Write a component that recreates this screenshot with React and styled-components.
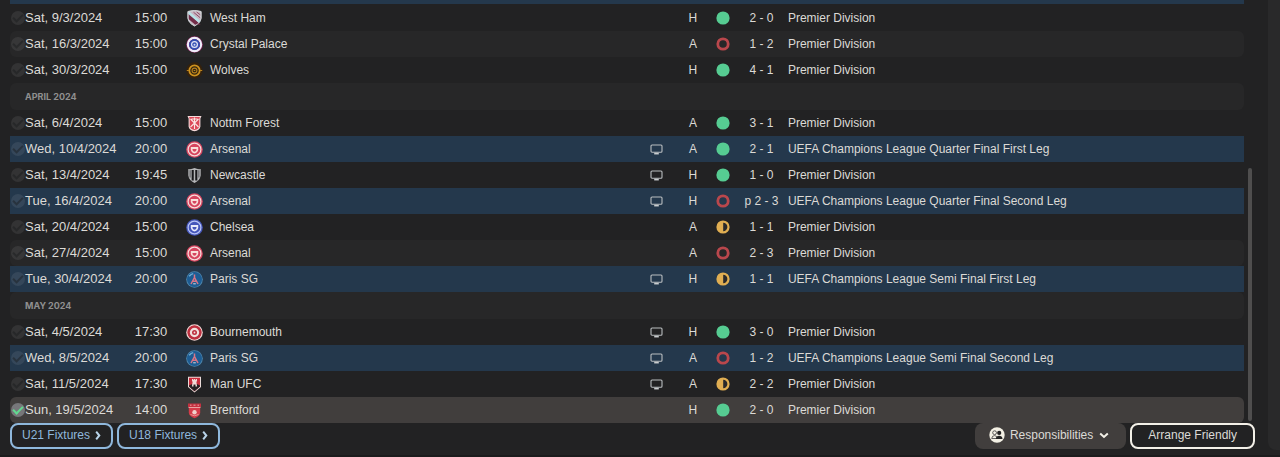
import React from 'react';
import styled, { createGlobalStyle, css } from 'styled-components';

const colors = {
    page: '#222223',
    stripe: '#272728',
    europe: '#24384c',
    selected: '#413e3d',
    text: '#dcdad6',
    muted: '#8f8f8f',
    link: '#8fb8dc',
    win: '#56cc92',
    loss: '#b9474c',
    draw: '#e0ae52'
};

const GlobalStyle = createGlobalStyle`
    * {
        box-sizing: border-box;
    }

    body {
        margin: 0;
        background: ${colors.page};
        color: ${colors.text};
        font-family: 'Liberation Sans', Arial, sans-serif;
        font-size: 12px;
    }
`;

// page: fixtures on the left, edge of the next panel on the right
const Page = styled.div`
    display: flex;
    gap: 13px;
    min-height: 100vh;
    border-bottom: 2px solid #1b1b1c;
`;

const Main = styled.main`
    flex: 1;
    min-width: 0;
    padding-left: 10px;
`;

const SidePanel = styled.aside`
    width: 12px;
    margin-bottom: 5px;
    background: #29292a;
    border-bottom-left-radius: 8px;
`;

// list + scrollbar
const ListArea = styled.div`
    display: flex;
    gap: 4px;
    padding-right: 3px;
`;

const ListBody = styled.div`
    flex: 1;
    min-width: 0;
`;

// tail of the row that is scrolled out of view
const ClippedRow = styled.div`
    height: 4px;
    margin-bottom: 1px;
    background: ${colors.europe};
`;

const ScrollTrack = styled.div`
    display: flex;
    flex-direction: column;
    justify-content: flex-end;
    width: 4px;
    padding-bottom: 2px;
`;

const ScrollThumb = styled.div`
    height: 60%;
    border-radius: 2px;
    background: #4f4e4e;
`;

const Table = styled.table`
    width: 100%;
    table-layout: fixed;
    border-collapse: separate;
    border-spacing: 0;
`;

const Col = styled.col`
    width: ${props => props.$width};
`;

const MonthCell = styled.th`
    height: 27px;
    padding: 0 0 0 15px;
    border-radius: 6px;
    background: ${colors.stripe};
    color: ${colors.muted};
    font-family: Inter, sans-serif;
    font-size: 9px;
    font-weight: 700;
    text-align: left;
    text-transform: uppercase;
`;

const rounded = css`
    > :first-child {
        border-radius: 6px 0 0 6px;
    }

    > :last-child {
        border-radius: 0 6px 6px 0;
    }
`;

const Row = styled.tr`
    > td {
        background: ${props => props.$tone ? colors[props.$tone] : 'transparent'};
    }

    ${props => props.$tone !== 'europe' && rounded}
`;

const Cell = styled.td`
    height: 26px;
    padding: 0;
    line-height: 16px;
    text-align: ${props => props.$align || 'left'};
    white-space: nowrap;

    svg {
        display: block;
        margin: 0 auto;
    }
`;

// date and kick-off
const TimeCell = styled(Cell)`
    font-size: 13px;
`;

const ClubCell = styled(Cell)`
    padding-left: 3px;
`;

// round tick box
const Tick = styled.input`
    appearance: none;
    display: grid;
    place-items: center;
    width: 14px;
    height: 14px;
    margin: 0 0 0 1px;
    border-radius: 50%;
    background: rgba(255, 255, 255, 0.08);

    &::after {
        content: '';
        width: 8px;
        height: 4px;
        margin-bottom: 3px;
        border: solid rgba(24, 26, 28, 0.45);
        border-width: 0 0 2px 2px;
        transform: rotate(-45deg);
    }

    &:checked {
        background: #77777a;
    }

    &:checked::after {
        border-color: #62d990;
    }
`;

const Footer = styled.footer`
    display: flex;
    align-items: center;
    gap: 4px;
`;

const Spacer = styled.div`
    flex-grow: 1;
`;

const Button = styled.button`
    display: flex;
    align-items: center;
    gap: 5px;
    height: 26px;
    padding: 0 10px 2px;
    border: 2px solid currentColor;
    border-radius: 8px;
    background: transparent;
    color: ${colors.link};
    font: inherit;
    line-height: 16px;
    white-space: nowrap;
`;

const LightButton = styled(Button)`
    padding: 0 16px 2px;
    border-color: #f3f0e8;
    color: ${colors.text};
`;

const SolidButton = styled(Button)`
    padding: 0 14px 2px 12px;
    border-color: transparent;
    background: ${colors.selected};
    color: ${colors.text};
`;

// club badges
const shield = 'M1.5 1.5Q8 -.4 14.5 1.5V8Q14 13 8 15.8Q2 13 1.5 8Z';

const RoundCrest = ({ outer, ring, inner, children }) => (
    <svg width="17" height="17" viewBox="0 0 17 17">
        <circle cx="8.5" cy="8.5" r="8.3" fill={outer}/>
        <circle cx="8.5" cy="8.5" r="6.4" fill="none" stroke={ring} strokeWidth="1.2"/>
        <circle cx="8.5" cy="8.5" r="4.4" fill={inner}/>
        {children}
    </svg>
);

const ShieldCrest = ({ children }) => (
    <svg width="17" height="17" viewBox="-.5 0 17 17">{children}</svg>
);

const cup = 'M4.8 6h7.4v2.6q-.4 3.2-3.7 3.9q-3.3-.7-3.7-3.9z';
const cupHole = 'M6.5 8H10.5V9Q10 10.4 8.5 10.8Q7 10.4 6.5 9Z';

const crests = {
    'West Ham': (
        <ShieldCrest>
            <path d={shield} fill="#c7b7c2" stroke="#dadde0"/>
            <path d="M2 3L14 14.5L9 15L2 9Z" fill="#722c48"/>
            <path d="M2 2.5L13.3 12" stroke="#b8e3e8" strokeWidth="2.4"/>
            <path d="M7 2.2L14 8M10 1.8L14 5" stroke="#914c69"/>
            <path d={shield} fill="none" stroke="#c9ccd0" strokeWidth=".9"/>
        </ShieldCrest>
    ),
    'Crystal Palace': (
        <RoundCrest outer="#8f2b62" ring="#efedf8" inner="#3551ad">
            <circle cx="8.5" cy="8.5" r="6.7" fill="none" stroke="#eeedfa" strokeWidth="2"/>
            <circle cx="8.5" cy="8.5" r="5.4" fill="#3450b3"/>
            <circle cx="8.5" cy="8.5" r="2.9" fill="none" stroke="#e7e5f4" strokeWidth="1.2"/>
            <circle cx="8.5" cy="8.8" r="1" fill="#d5d7f4"/>
        </RoundCrest>
    ),
    'Wolves': (
        <RoundCrest outer="#34220e" ring="#34220e" inner="#352710">
            <circle cx="8.5" cy="8.5" r="5.2" fill="none" stroke="#ce921e" strokeWidth="1.8"/>
            <circle cx="8.5" cy="8.5" r="2.4" fill="none" stroke="#b47e1c" strokeWidth="1.1"/>
            <path d="M.8 8.5H3M14 8.5H16.2M7.7 8.5h1.6" stroke="#b8821f"/>
        </RoundCrest>
    ),
    'Nottm Forest': (
        <ShieldCrest>
            <path d="M1 1H15L13.9 3.5V11.7Q13 15.3 8 16.2Q3 15.3 2.1 11.7V3.5Z" fill="#f5dada"/>
            <path d="M2.6 2H13.4L12.8 4V11.5Q12 14.2 8 15Q4 14.2 3.2 11.5V4Z" fill="#dc4858"/>
            <path d="M8 2.5V14M4 4L12 12M12 4L4 12M5 4H11" stroke="#fae4e2" strokeWidth="1.1"/>
        </ShieldCrest>
    ),
    'Arsenal': (
        <RoundCrest outer="#d6455f" ring="#f7dcdc" inner="#d6455f">
            <path d={cup} fill="#f9dfda"/>
            <path d={cupHole} fill="#d6455f"/>
        </RoundCrest>
    ),
    'Newcastle': (
        <ShieldCrest>
            <path d="M1.8 2Q5 2.5 8 1Q11 2.5 14.2 2V8.5Q13.5 13.5 8 16Q2.5 13.5 1.8 8.5Z" fill="#b5b6b8"/>
            <path d="M3.6 3.2V10.6M12.4 3.2V10.6" stroke="#55565a" strokeWidth="1"/>
            <path d="M6.2 3V13.4M9.8 3V13.4" stroke="#18181a" strokeWidth="2.1"/>
        </ShieldCrest>
    ),
    'Chelsea': (
        <RoundCrest outer="#4657bb" ring="#b9c4f5" inner="#4657bb">
            <path d={cup} fill="#e8eafa"/>
            <path d={cupHole} fill="#4657bb"/>
        </RoundCrest>
    ),
    'Paris SG': (
        <RoundCrest outer="#4f87ad" ring="#1d5c93" inner="#1d5c93">
            <circle cx="8.5" cy="8.5" r="7.4" fill="#1d5c93"/>
            <path d="M3.2 5.2Q5 3 7.2 2.6" fill="none" stroke="#6fb0d6" strokeWidth="1.4"/>
            <path d="M8.5 3.5V6.5L12 13M8.5 6.5L5 13M6.5 10.2H10.5" fill="none" stroke="#d87586" strokeWidth="1.5"/>
            <path d="M7.2 12.8h2.6" stroke="#d5d9de"/>
        </RoundCrest>
    ),
    'Bournemouth': (
        <RoundCrest outer="#eed3d1" ring="#bd303f" inner="#efe2df">
            <circle cx="8.5" cy="8.5" r="5.8" fill="none" stroke="#bd303f" strokeWidth="2.2"/>
            <circle cx="8.5" cy="8.5" r="2.5" fill="#bd303f"/>
            <circle cx="8.5" cy="8.5" r=".9" fill="#f2dedb"/>
        </RoundCrest>
    ),
    'Man UFC': (
        <ShieldCrest>
            <path d="M1.5 .7H14.5V11L8 16.5L1.5 11Z" fill="#ebdcda"/>
            <path d="M2.5 1.7H13.5V10.5L8 15.2L2.5 10.5Z" fill="#c92c3c"/>
            <path d="M2.5 9.5L5 8.2H11L13.5 9.5V10.5L8 15.2L2.5 10.5Z" fill="#252022"/>
            <path d="M5.5 3H6.8V4H7.4V3H8.6V4H9.2V3H10.5V5.5H9.8L10.6 10.5H9V8.5H7V10.5H5.4L6.2 5.5H5.5Z" fill="#f2dad7"/>
        </ShieldCrest>
    ),
    'Brentford': (
        <ShieldCrest>
            <path d="M1.5 1.5H14.5V5H1.5Z" fill="#c43140"/>
            <path d="M2.3 6H13.7V11Q13 14.5 8 16.2Q3 14.5 2.3 11Z" fill="#d53b49"/>
            <path d="M2 5.5H14M3.5 3.2H5M7 3.2H9M11 3.2H12.5" stroke="#e9a3a3"/>
            <circle cx="8" cy="10.3" r="2.2" fill="#f1d0cb"/>
            <path d="M4 12.5Q8 15 12 12.5" fill="none" stroke="#ec9a97"/>
        </ShieldCrest>
    )
};

const Screen = () => (
    <svg width="13" height="11" viewBox="0 0 13 11">
        <rect x="1" y="1" width="11" height="7.2" rx="1" fill="none" stroke="#b9bdc0" strokeWidth="1.1"/>
        <path d="M4.2 9.6H8.8" stroke="#c9ccce" strokeWidth="1.7"/>
    </svg>
);

const Result = ({ type }) => (
    <svg width="14" height="14" viewBox="0 0 14 14">
        {type === 'win' && <circle cx="7" cy="7" r="6.6" fill={colors.win}/>}
        {type === 'loss' && <circle cx="7" cy="7" r="5.2" fill="none" stroke={colors.loss} strokeWidth="2.8"/>}
        {type === 'draw' && (
            <>
                <circle cx="7" cy="7" r="6.6" fill={colors.draw}/>
                <path d="M7.2 2.8A4.2 4.2 0 0 1 7.2 11.2Z" fill="#29292b"/>
            </>
        )}
    </svg>
);

const ChevronRight = () => (
    <svg width="6" height="10" viewBox="0 0 6 10">
        <path d="M1.2 1.7L4.3 5.5L1.2 9.3" fill="none" stroke="#b9d4ea" strokeWidth="2"/>
    </svg>
);

const ChevronDown = () => (
    <svg width="12" height="8" viewBox="0 0 12 8">
        <path d="M2.2 2.5L6 6L9.8 2.5" fill="none" stroke="#f3f0e8" strokeWidth="2"/>
    </svg>
);

const Staff = () => (
    <svg width="16" height="16" viewBox="0 0 16 16">
        <circle cx="8" cy="8" r="7.7" fill="#f3f0e4"/>
        <circle cx="5.6" cy="5.7" r="1.9" fill="none" stroke="#3a3838" strokeWidth=".8"/>
        <path d="M2.7 11.5Q3 8.6 5.6 8.6Q8 8.6 8.2 11.5Z" fill="none" stroke="#3a3838" strokeWidth=".8"/>
        <circle cx="10.2" cy="5.9" r="2.1" fill="#242323"/>
        <path d="M6.9 12Q7.2 8.7 10.2 8.7Q13.2 8.7 13.5 12Z" fill="#242323"/>
    </svg>
);

const E = 'europe';
const S = 'stripe';
const PL = 'Premier Division';
const UCL = 'UEFA Champions League';

// tone, date, time, club, on tv, venue, result, score, competition
const months = [
    {
        rows: [
            ['', 'Sat, 9/3/2024', '15:00', 'West Ham', false, 'H', 'win', '2 - 0', PL],
            [S, 'Sat, 16/3/2024', '15:00', 'Crystal Palace', false, 'A', 'loss', '1 - 2', PL],
            ['', 'Sat, 30/3/2024', '15:00', 'Wolves', false, 'H', 'win', '4 - 1', PL]
        ]
    },
    {
        title: 'April 2024',
        rows: [
            ['', 'Sat, 6/4/2024', '15:00', 'Nottm Forest', false, 'A', 'win', '3 - 1', PL],
            [E, 'Wed, 10/4/2024', '20:00', 'Arsenal', true, 'A', 'win', '2 - 1', `${UCL} Quarter Final First Leg`],
            ['', 'Sat, 13/4/2024', '19:45', 'Newcastle', true, 'H', 'win', '1 - 0', PL],
            [E, 'Tue, 16/4/2024', '20:00', 'Arsenal', true, 'H', 'loss', 'p 2 - 3', `${UCL} Quarter Final Second Leg`],
            ['', 'Sat, 20/4/2024', '15:00', 'Chelsea', false, 'A', 'draw', '1 - 1', PL],
            [S, 'Sat, 27/4/2024', '15:00', 'Arsenal', false, 'A', 'loss', '2 - 3', PL],
            [E, 'Tue, 30/4/2024', '20:00', 'Paris SG', true, 'H', 'draw', '1 - 1', `${UCL} Semi Final First Leg`]
        ]
    },
    {
        title: 'May 2024',
        rows: [
            ['', 'Sat, 4/5/2024', '17:30', 'Bournemouth', true, 'H', 'win', '3 - 0', PL],
            [E, 'Wed, 8/5/2024', '20:00', 'Paris SG', true, 'A', 'loss', '1 - 2', `${UCL} Semi Final Second Leg`],
            ['', 'Sat, 11/5/2024', '17:30', 'Man UFC', true, 'A', 'draw', '2 - 2', PL],
            ['selected', 'Sun, 19/5/2024', '14:00', 'Brentford', false, 'H', 'win', '2 - 0', PL]
        ]
    }
];

const widths = ['15px', '95px', '62px', '25px', '35%', '36px', '36px', '24px', '53px', 'auto'];

const Fixture = ({ row }) => {
    const [tone, date, time, club, tv, venue, result, score, competition] = row;
    const id = 'date-' + date.replace(/\W+/g, '-');

    return (
        <Row $tone={tone}>
            <Cell><Tick type="checkbox" aria-labelledby={id} defaultChecked={tone === 'selected'}/></Cell>
            <TimeCell id={id}>{date}</TimeCell>
            <TimeCell $align="center">{time}</TimeCell>
            <Cell>{crests[club]}</Cell>
            <ClubCell>{club}</ClubCell>
            <Cell>{tv && <Screen/>}</Cell>
            <Cell $align="center">{venue}</Cell>
            <Cell><Result type={result}/></Cell>
            <Cell $align="center">{score}</Cell>
            <Cell>{competition}</Cell>
        </Row>
    );
};

const App = () => (
    <>
        <GlobalStyle/>
        <Page>
            <Main>
                <ListArea>
                    <ListBody>
                        <ClippedRow/>
                        <Table>
                            <colgroup>
                                {widths.map((width, i) => <Col key={i} $width={width}/>)}
                            </colgroup>
                            {months.map((month, i) => (
                                <tbody key={i}>
                                    {month.title && (
                                        <tr>
                                            <MonthCell colSpan={widths.length} scope="rowgroup">{month.title}</MonthCell>
                                        </tr>
                                    )}
                                    {month.rows.map(row => <Fixture key={row[1]} row={row}/>)}
                                </tbody>
                            ))}
                        </Table>
                    </ListBody>
                    <ScrollTrack>
                        <ScrollThumb/>
                    </ScrollTrack>
                </ListArea>
                <Footer>
                    <Button type="button">U21 Fixtures <ChevronRight/></Button>
                    <Button type="button">U18 Fixtures <ChevronRight/></Button>
                    <Spacer/>
                    <SolidButton type="button"><Staff/> Responsibilities <ChevronDown/></SolidButton>
                    <LightButton type="button">Arrange Friendly</LightButton>
                </Footer>
            </Main>
            <SidePanel/>
        </Page>
    </>
);

export default App;
